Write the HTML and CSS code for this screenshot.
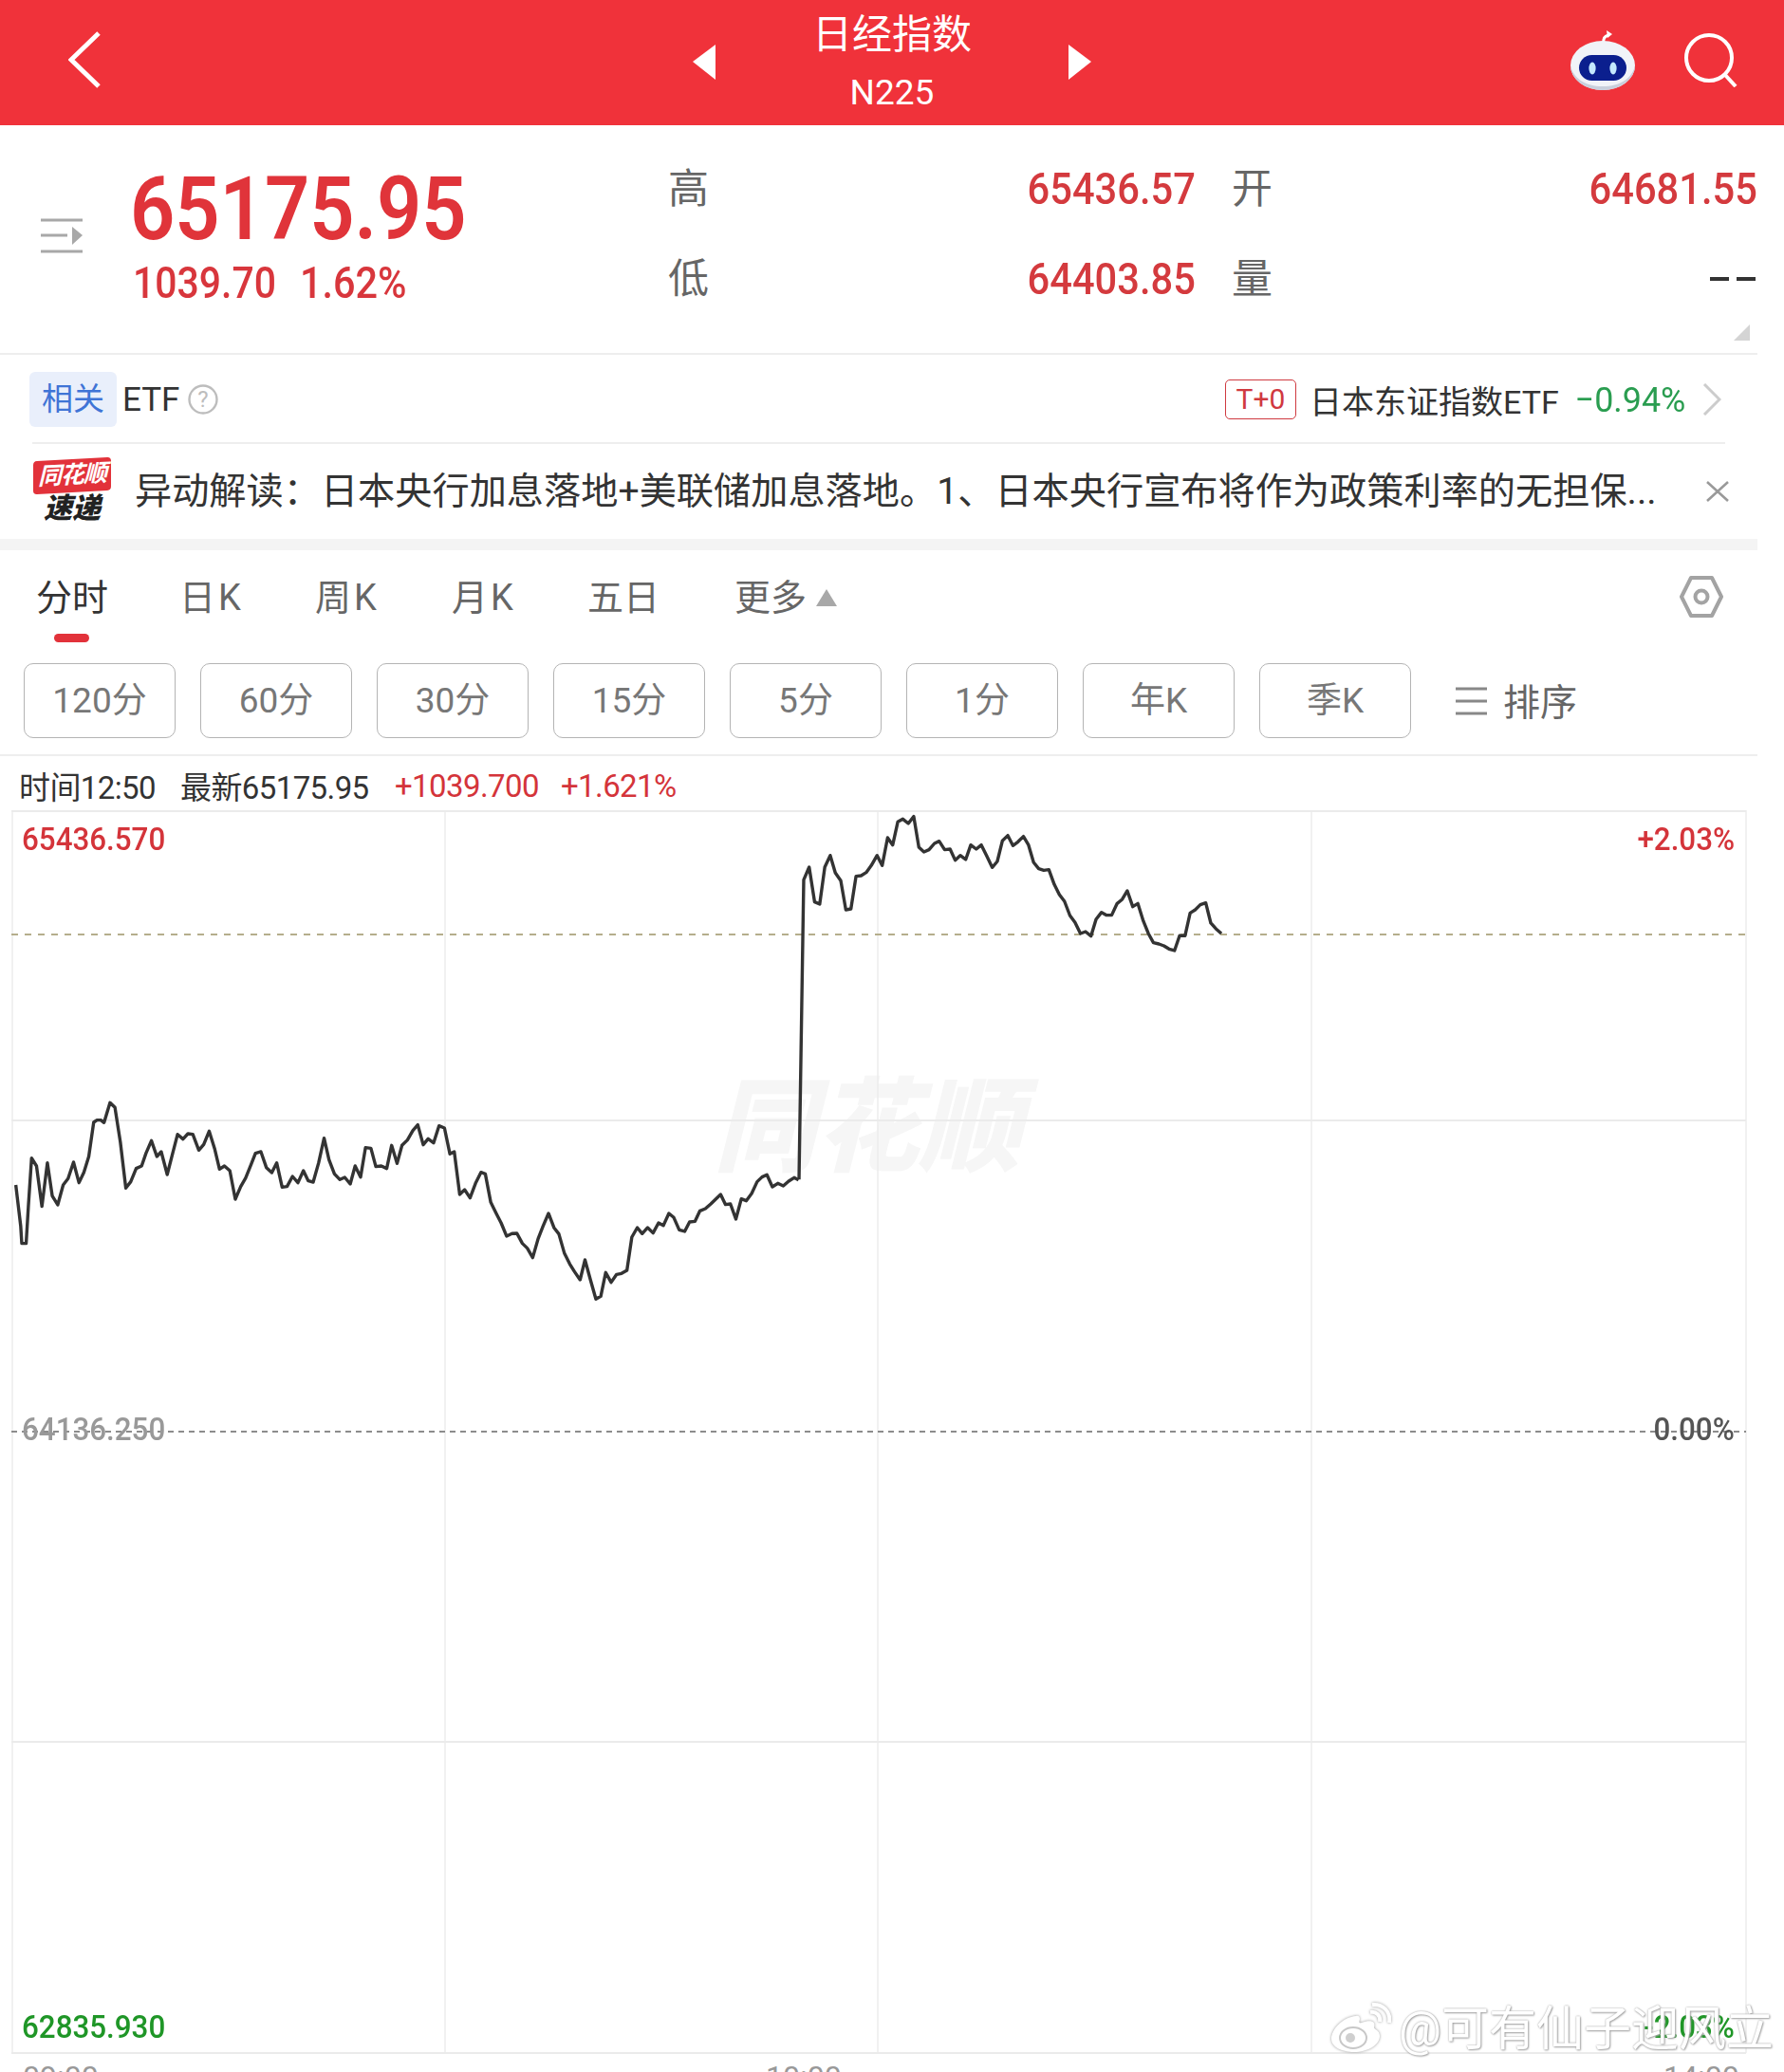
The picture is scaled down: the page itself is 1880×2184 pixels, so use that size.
FILE: index.html
```html
<!DOCTYPE html>
<html lang="zh-CN">
<head>
<meta charset="utf-8">
<title>日经指数</title>
<link rel="stylesheet" href="styles.css">
</head>
<body>
<div class="page">
  <header class="topbar">
    <svg class="ic-back" viewBox="0 0 34 60"><path d="M32 2 3 30l29 28" fill="none" stroke="#fff" stroke-width="5"/></svg>
    <div class="title-group">
      <svg class="ic-tri" viewBox="0 0 24 37"><path d="M24 0v37L0 18z" fill="#fff"/></svg>
      <div class="title">
        <div class="title-cn">日经指数</div>
        <div class="title-en">N225</div>
      </div>
      <svg class="ic-tri" viewBox="0 0 24 37"><path d="M0 0v37l24-19z" fill="#fff"/></svg>
    </div>
    <svg class="ic-robot" viewBox="0 0 70 64">
      <path d="M36 14c-1-5 1-8 5-9" fill="none" stroke="#fff" stroke-width="3"/>
      <path d="M39 0l6 4-5 4z" fill="#fff"/>
      <ellipse cx="35" cy="37" rx="34" ry="26" fill="#f1f3f8"/>
      <path d="M1 37c0 14 15 26 34 26s34-12 34-26c-3 14-16 22-34 22S4 51 1 37z" fill="#c9cfdc"/>
      <rect x="10" y="26" width="50" height="27" rx="13.5" fill="#0b1f8e"/>
      <ellipse cx="24" cy="40" rx="3.6" ry="6.5" fill="#c4e9ff"/>
      <ellipse cx="46" cy="40" rx="3.6" ry="6.5" fill="#c4e9ff"/>
    </svg>
    <svg class="ic-search" viewBox="0 0 56 58"><circle cx="26" cy="27" r="24" fill="none" stroke="#fff" stroke-width="4"/><path d="M43 45l11 12" stroke="#fff" stroke-width="4"/></svg>
  </header>

  <section class="quote">
    <svg class="ic-menu" viewBox="0 0 44 37"><path d="M0 2h44M0 18h28M0 35h44" stroke="#a8a8a8" stroke-width="3"/><path d="M33 9l11 9-11 10z" fill="#a8a8a8"/></svg>
    <div class="q-main">
      <div class="q-price"><span class="num">65175.95</span></div>
      <div class="q-change"><span class="num">1039.70</span><span class="num">1.62%</span></div>
    </div>
    <div class="q-stats">
      <div class="stat"><span class="stat-k">高</span><span class="num-r">65436.57</span></div>
      <div class="stat"><span class="stat-k">开</span><span class="num-r">64681.55</span></div>
      <div class="stat"><span class="stat-k">低</span><span class="num-r">64403.85</span></div>
      <div class="stat"><span class="stat-k">量</span><span class="stat-dash"><i></i><i></i></span></div>
    </div>
    <svg class="ic-corner" viewBox="0 0 17 17"><path d="M17 0v17H0z" fill="#d4d4d4"/></svg>
  </section>

  <section class="etf">
    <span class="etf-tag">相关</span>
    <span class="etf-name">ETF</span>
    <svg class="ic-help" viewBox="0 0 32 34"><circle cx="16" cy="17" r="14.5" fill="none" stroke="#bdbdbd" stroke-width="2.4"/><text x="16" y="25" text-anchor="middle" class="help-q">?</text></svg>
    <span class="etf-badge">T+0</span>
    <span class="etf-fund">日本东证指数ETF</span>
    <span class="etf-pct"><span class="num-r">−0.94%</span></span>
    <svg class="ic-next" viewBox="0 0 20 34"><path d="M2 1l16 16L2 33" fill="none" stroke="#ccc" stroke-width="3"/></svg>
  </section>

  <section class="news">
    <div class="logo">
      <div class="logo-top">同花顺</div>
      <div class="logo-bot">速递</div>
    </div>
    <div class="news-text">异动解读：日本央行加息落地+美联储加息落地。1、日本央行宣布将作为政策利率的无担保...</div>
    <svg class="ic-close" viewBox="0 0 24 22"><path d="M1 1l22 20M23 1L1 21" stroke="#999" stroke-width="2.6"/></svg>
  </section>

  <div class="band"></div>

  <nav class="tabs">
    <span class="tab tab-on">分时</span>
    <span class="tab tab-k">日K</span>
    <span class="tab tab-k">周K</span>
    <span class="tab tab-k">月K</span>
    <span class="tab">五日</span>
    <span class="tab tab-more">更多<svg class="ic-up" viewBox="0 0 22 18"><path d="M11 0l11 18H0z" fill="#a8a8a8"/></svg></span>
    <svg class="ic-gear" viewBox="0 0 46 44"><path d="M12 2h22l10 20-10 20H12L2 22z" fill="none" stroke="#a3a3a3" stroke-width="4" stroke-linejoin="round"/><circle cx="23" cy="22" r="6.5" fill="none" stroke="#a3a3a3" stroke-width="4"/></svg>
  </nav>

  <div class="chips">
    <span class="chip">120分</span>
    <span class="chip">60分</span>
    <span class="chip">30分</span>
    <span class="chip">15分</span>
    <span class="chip">5分</span>
    <span class="chip">1分</span>
    <span class="chip">年K</span>
    <span class="chip">季K</span>
    <span class="sort"><svg class="ic-sort" viewBox="0 0 35 30"><path d="M1 2h33M1 15h33M1 28h33" stroke="#888" stroke-width="3"/></svg>排序</span>
  </div>

  <div class="info">
    <span class="info-a">时间12:50</span>
    <span class="info-b">最新65175.95</span>
    <span class="info-c">+1039.700</span>
    <span class="info-d">+1.621%</span>
  </div>

  <div class="chart">
    <div class="brand">同花顺</div>
    <svg class="plot" viewBox="0 855 1880 1312">
      <g class="grid">
        <path d="M12 856H1840M12 1182H1840M12 1837H1840M12 2165H1840" stroke-width="2"/>
        <path d="M13 855V2165M469 855V2165M925 855V2165M1382 855V2165M1840 855V2165" stroke-width="1.4"/>
      </g>
      <path class="open-line" d="M12 986H1840"/>
      <path class="zero-line" d="M12 1510H1840"/>
      <g transform="translate(0 1100) scale(.574 .3333)">
        <polyline class="trace" points="29,450 38,580 40,635 48,635 52,520 58,365 67,390 77,518 87,380 96,485 106,513 116,450 125,430 135,378 145,443 154,410 163,360 172,252 178,245 185,245 191,253 202,190 211,205 221,315 231,460 240,440 250,398 260,390 268,350 278,310 288,360 296,345 307,417 317,350 326,290 336,305 345,288 354,290 365,340 374,322 384,280 394,335 403,400 412,390 422,405 432,495 442,455 451,428 461,385 469,350 479,345 489,395 499,411 508,380 518,457 527,455 537,423 547,443 557,405 566,437 575,441 585,380 595,302 604,370 614,415 624,433 633,426 643,447 652,390 662,425 671,332 681,334 690,392 700,390 710,398 719,325 729,382 738,325 748,308 758,278 767,260 777,323 786,304 796,317 806,263 816,270 826,352 834,345 844,480 853,465 863,491 873,445 883,410 891,415 901,505 911,540 920,570 930,612 940,604 949,603 959,635 968,650 978,680 988,620 997,580 1007,540 1017,585 1026,605 1036,665 1046,700 1055,725 1065,750 1074,687 1084,750 1094,811 1103,802 1112,727 1122,758 1132,733 1141,730 1151,720 1160,615 1170,585 1179,604 1189,585 1199,602 1209,570 1218,578 1228,540 1237,553 1247,592 1257,597 1266,567 1276,565 1285,532 1295,525 1305,510 1323,480 1332,512 1341,510 1351,558 1361,494 1370,500 1380,477 1390,440 1399,425 1408,418 1418,456 1428,445 1438,453 1448,438 1458,427 1466,434"/>
      </g>
      <g transform="translate(780 850) scale(.3827 .3333)">
        <polyline class="trace" points="162,1183 175,235 190,195 205,305 219,312 233,195 248,158 262,213 277,238 291,330 305,327 319,224 333,222 347,212 361,190 377,158 391,190 406,102 420,125 434,52 448,43 463,57 478,35 492,132 506,147 520,140 535,120 548,113 563,140 578,138 592,173 606,158 621,171 635,125 650,138 664,125 679,160 694,196 708,177 722,112 737,95 751,127 765,115 780,98 794,125 808,180 822,200 836,205 850,203 865,250 879,282 893,303 908,348 922,370 937,405 951,399 966,413 980,360 995,338 1009,347 1023,347 1038,310 1052,297 1066,270 1081,320 1095,310 1110,365 1124,405 1138,434 1153,438 1167,444 1181,454 1196,459 1210,412 1225,412 1239,340 1253,330 1267,314 1282,308 1296,372 1310,390 1325,405"/>
      </g>
    </svg>
    <span class="lab lab-hi"><span class="num">65436.570</span></span>
    <span class="lab lab-hip"><span class="num-r">+2.03%</span></span>
    <span class="lab lab-mid"><span class="num">64136.250</span></span>
    <span class="lab lab-midp"><span class="num-r">0.00%</span></span>
    <span class="lab lab-lo"><span class="num">62835.930</span></span>
    <span class="lab lab-lop"><span class="num-r">-2.03%</span></span>
  </div>

  <div class="axis">
    <span>09:00</span>
    <span>10:00</span>
    <span>14:00</span>
  </div>

  <div class="wm">
    <svg class="ic-weibo" viewBox="0 0 64 54">
      <path d="M27 15C13 16 1 29 1 39c0 9 12 14 24 14 15 0 27-8 27-17 0-6-6-7-6-9 2-6-3-9-13-5-3 1-3 0-2-4 0-3-2-4-4-3z" fill="#fff"/>
      <ellipse cx="24" cy="38" rx="14" ry="11" fill="none" stroke="#c8c8c8" stroke-width="2"/>
      <circle cx="21" cy="38" r="5" fill="#cfcfcf"/>
      <path d="M42 11c6-1 11 3 10 10M44 3c11-1 20 7 18 19" fill="none" stroke="#fff" stroke-width="4"/>
    </svg>
    <span class="wm-text">@可有仙子迎风立</span>
  </div>
</div>
</body>
</html>
```

FILE: styles.css
```css
* { box-sizing: border-box; }
html, body { margin: 0; padding: 0; height: 2184px; overflow: hidden; background: #fff; }
body { font-family: Roboto, "Noto Sans CJK SC", sans-serif; color: #333; }
.page { position: relative; width: 1880px; height: 2184px; overflow: hidden; }
svg { display: block; flex: none; }
.num, .num-r { display: inline-block; transform: scaleX(.88); white-space: nowrap; }
.num { transform-origin: left center; }
.num-r { transform-origin: right center; }

.topbar { display: flex; align-items: center; height: 132px; background: #f0323a; color: #fff; padding: 0 49px 0 72px; }
.ic-back { width: 34px; height: 60px; margin-top: -7px; }
.title-group { display: flex; align-items: center; margin-left: 624px; }
.ic-tri { width: 24px; height: 37px; margin-top: -2px; }
.title { width: 372px; text-align: center; }
.title-cn { font-size: 42px; line-height: 50px; margin-top: -2px; }
.title-en { font-size: 37px; line-height: 42px; margin-top: 15px; }
.ic-robot { width: 72px; height: 64px; margin-left: auto; margin-top: -4px; }
.ic-search { width: 56px; height: 58px; margin-left: 50px; margin-top: -6px; }

.quote { position: relative; display: flex; width: 1852px; height: 242px; border-bottom: 2px solid #eee; }
.ic-menu { width: 44px; height: 37px; margin: 98px 0 0 43px; }
.q-main { width: 620px; margin-left: 50px; color: #e0343a; }
.q-price { font-size: 92px; font-weight: 600; line-height: 92px; margin-top: 43px; white-space: nowrap; }
.q-price .num { transform: scaleX(.9); }
.q-change { display: flex; padding-left: 3px; font-size: 46px; font-weight: 500; line-height: 52px; margin-top: 5px; color: #d8363c; }
.q-change .num { width: 176px; transform: scaleX(.89); }
.q-change .num:last-child { transform: scaleX(.9); }
.q-stats { display: grid; grid-template-columns: 556px 554px; column-gap: 38px; grid-auto-rows: 42px; row-gap: 53px; margin: 46px 0 0 -52px; }
.stat { display: flex; justify-content: space-between; align-items: center; font-size: 46px; font-weight: 500; color: #d43a3e; }
.stat .num-r { transform: scaleX(.905); }
.stat-k { font-size: 43px; font-weight: 400; color: #666; line-height: 42px; }
.stat-dash { display: flex; gap: 8px; margin-right: 2px; }
.stat-dash i { display: block; width: 20px; height: 4px; background: #333; }
.ic-corner { position: absolute; right: 8px; top: 210px; width: 17px; height: 17px; }

.etf { display: flex; align-items: center; width: 1852px; height: 94px; padding-left: 31px; position: relative; }
.etf::after { content: ""; position: absolute; left: 34px; right: 34px; bottom: 0; height: 2px; background: #eee; }
.etf-tag { width: 92px; height: 58px; line-height: 58px; text-align: center; background: #e9effb; border-radius: 6px; color: #3f74d6; font-size: 33px; }
.etf-name { font-size: 35px; margin-left: 6px; color: #333; }
.ic-help { width: 32px; height: 34px; margin-left: 9px; }
.help-q { font-size: 24px; fill: #bdbdbd; }
.etf-badge { width: 75px; height: 42px; margin-left: auto; margin-right: 14px; border: 1px solid #cf3a40; border-radius: 5px; color: #d0393f; font-size: 30px; line-height: 40px; text-align: center; }
.etf-fund { font-size: 34px; color: #333; width: 276px; white-space: nowrap; }
.etf-pct { width: 115px; font-size: 37px; color: #2a9d50; text-align: right; }
.etf-pct .num-r { transform: scaleX(.97); }
.ic-next { width: 20px; height: 34px; margin: 0 38px 0 23px; }

.news { display: flex; align-items: center; width: 1852px; height: 100px; padding-left: 35px; }
.logo { width: 82px; height: 68px; }
.logo-top { height: 35px; background: #e2323a; border-radius: 4px; color: #fff; font-size: 25px; line-height: 34px; font-weight: 700; font-style: italic; text-align: center; transform: skewY(-3deg); letter-spacing: -1px; }
.logo-bot { font-size: 30px; line-height: 34px; font-weight: 900; font-style: italic; color: #222; text-align: center; }
.news-text { width: 1629px; margin-left: 25px; font-size: 39.2px; line-height: 50px; color: #333; white-space: nowrap; overflow: hidden; }
.ic-close { width: 24px; height: 22px; margin-left: 27px; }

.band { width: 1852px; height: 12px; background: #f4f4f4; }

.tabs { position: relative; width: 1852px; height: 119px; font-size: 38px; color: #666; }
.tab { position: absolute; top: 27px; line-height: 46px; white-space: nowrap; }
.tab:nth-child(1) { left: 38px; color: #333; }
.tab:nth-child(2) { left: 189px; }
.tab:nth-child(3) { left: 332px; }
.tab:nth-child(4) { left: 476px; }
.tab:nth-child(5) { left: 619px; }
.tab-k { letter-spacing: 3px; }
.tab-more { left: 774px; display: flex; align-items: center; gap: 10px; }
.tab-on::after { content: ""; position: absolute; left: 19px; top: 61px; width: 37px; height: 9px; border-radius: 5px; background: #e2323a; }
.ic-up { width: 22px; height: 18px; }
.ic-gear { position: absolute; left: 1770px; top: 27px; width: 46px; height: 44px; }

.chips { display: flex; gap: 26px; align-items: flex-start; width: 1852px; height: 98px; padding-left: 25px; border-bottom: 2px solid #eee; }
.chip { width: 160px; height: 79px; border: 1.4px solid #b4b4b4; border-radius: 10px; text-align: center; line-height: 78px; font-size: 37px; color: #777; }
.sort { display: flex; align-items: center; height: 79px; gap: 16px; margin-left: 20px; padding-bottom: 3px; font-size: 39px; color: #666; }
.ic-sort { width: 35px; height: 30px; margin-top: 3px; }

.info { display: flex; align-items: center; height: 57px; padding: 5px 0 0 20px; font-size: 33px; color: #333; white-space: nowrap; }
.info-a { width: 170px; }
.info-b { width: 226px; }
.info-c { width: 175px; color: #d4343a; }
.info-d { color: #d4343a; }
.info span { letter-spacing: -.6px; }

.chart { position: relative; height: 1312px; }
.plot { position: absolute; left: 0; top: 0; width: 1880px; height: 1312px; }
.grid path { stroke: #ebebeb; fill: none; }
.open-line { stroke: #b5ae8c; stroke-width: 2; stroke-dasharray: 7 7; fill: none; }
.zero-line { stroke: #8c8c8c; stroke-width: 2; stroke-dasharray: 6 5; fill: none; }
.trace { fill: none; stroke: #333; stroke-width: 3.4; stroke-linejoin: round; vector-effect: non-scaling-stroke; }
.brand { position: absolute; left: 752px; top: 270px; font-size: 108px; line-height: 130px; font-weight: 900; font-style: italic; color: #f6f6f6; }
.lab { position: absolute; font-size: 33px; font-weight: 500; line-height: 40px; white-space: nowrap; }
.lab .num, .lab .num-r { transform: scaleX(.95); }
.lab-hi { left: 23px; top: 11px; color: #d4343a; }
.lab-hip { right: 52px; top: 11px; color: #d4343a; }
.lab-mid { left: 23px; top: 633px; color: #999; }
.lab-midp { right: 52px; top: 633px; color: #555; }
.lab-lo { left: 23px; top: 1263px; color: #1f9627; }
.lab-lop { right: 52px; top: 1263px; color: #1f9627; }

.axis { display: grid; grid-template-columns: 783px 946px auto; margin-top: 3px; padding-left: 24px; font-size: 32px; line-height: 40px; color: #999; }

.wm { position: absolute; left: 1402px; top: 2110px; display: flex; align-items: flex-start; gap: 8px; }
.ic-weibo { width: 64px; height: 54px; filter: drop-shadow(0 0 1.5px #999); }
.wm-text { font-size: 50px; line-height: 54px; color: #fff; white-space: nowrap; text-shadow: 0 0 2px #999, 1px 1px 2px #aaa; margin-top: 2px; }
```
